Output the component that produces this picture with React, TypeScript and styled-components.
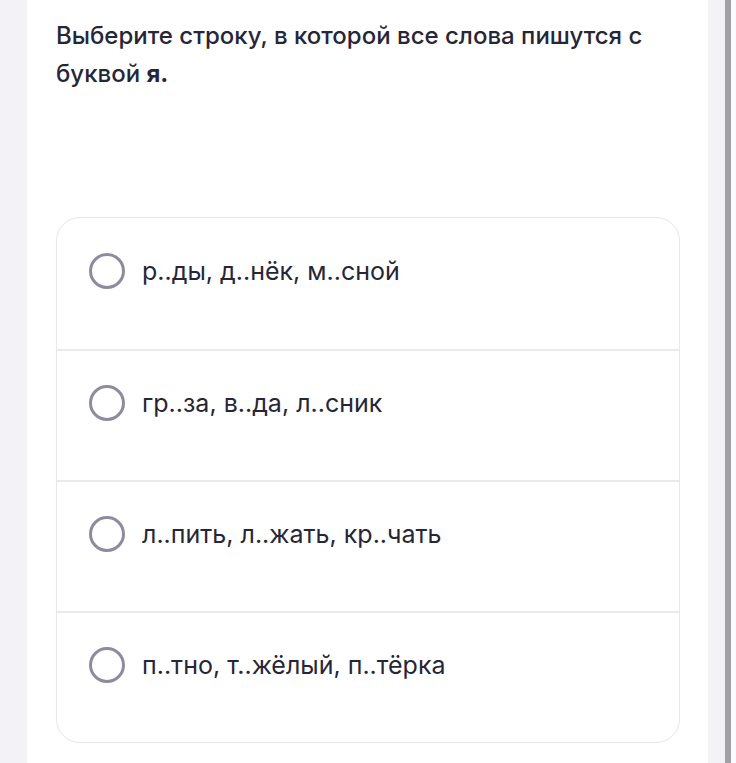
import React from "react";
import styled, { createGlobalStyle } from "styled-components";

const Global = createGlobalStyle`
  html, body { margin: 0; padding: 0; background: #f2f2f7; }
  body { font-family: Inter, "Noto Sans", sans-serif; -webkit-font-smoothing: antialiased; }
`;

const Page = styled.div`
  display: flex;
  min-height: 763px;
  background: #f2f2f7;
`;

const Gutter = styled.div<{ $w: number }>`
  flex: 0 0 ${(p) => p.$w}px;
  background: #f2f2f7;
`;

const Panel = styled.main`
  flex: 0 0 681px;
  box-sizing: border-box;
  background: #ffffff;
  padding: 17px 28px 20px 29px;
`;

const Scrollbar = styled.div`
  flex: 0 0 6px;
  background: #a2a2a6;
`;

const Edge = styled.div`
  flex: 1;
  background: #fbfbfd;
`;

const Title = styled.h1`
  margin: 0;
  font-size: 24px;
  font-weight: 500;
  line-height: 38px;
  color: #262637;
  letter-spacing: 0;
`;

const Strong = styled.b`
  font-weight: 700;
`;

const Card = styled.div`
  margin-top: 124px;
  border: 1.5px solid #e6e6ee;
  border-radius: 24px;
  overflow: hidden;
  background: #fff;
`;

const Row = styled.label`
  display: flex;
  align-items: center;
  gap: 17px;
  box-sizing: border-box;
  height: 131px;
  padding: 0 36px 25px 32px;
  border-top: 2px solid #e9e9ef;
  &:first-child { border-top: none; }
  cursor: pointer;
`;

const Radio = styled.span`
  flex: 0 0 auto;
  width: 30px;
  height: 30px;
  border: 3.5px solid #8d8b9f;
  border-radius: 50%;
`;

const OptionText = styled.span`
  font-size: 25px;
  font-weight: 400;
  color: #262637;
  line-height: 37px;
`;

const options = [
  "р..ды, д..нёк, м..сной",
  "гр..за, в..да, л..сник",
  "л..пить, л..жать, кр..чать",
  "п..тно, т..жёлый, п..тёрка",
];

export default function App() {
  return (
    <>
      <Global />
      <Page>
        <Gutter $w={27} />
        <Panel>
          <Title>
            Выберите строку, в которой все слова пишутся с буквой <Strong>я.</Strong>
          </Title>
          <Card>
            {options.map((o) => (
              <Row key={o}>
                <Radio />
                <OptionText>{o}</OptionText>
              </Row>
            ))}
          </Card>
        </Panel>
        <Gutter $w={17} />
        <Scrollbar />
        <Edge />
      </Page>
    </>
  );
}
